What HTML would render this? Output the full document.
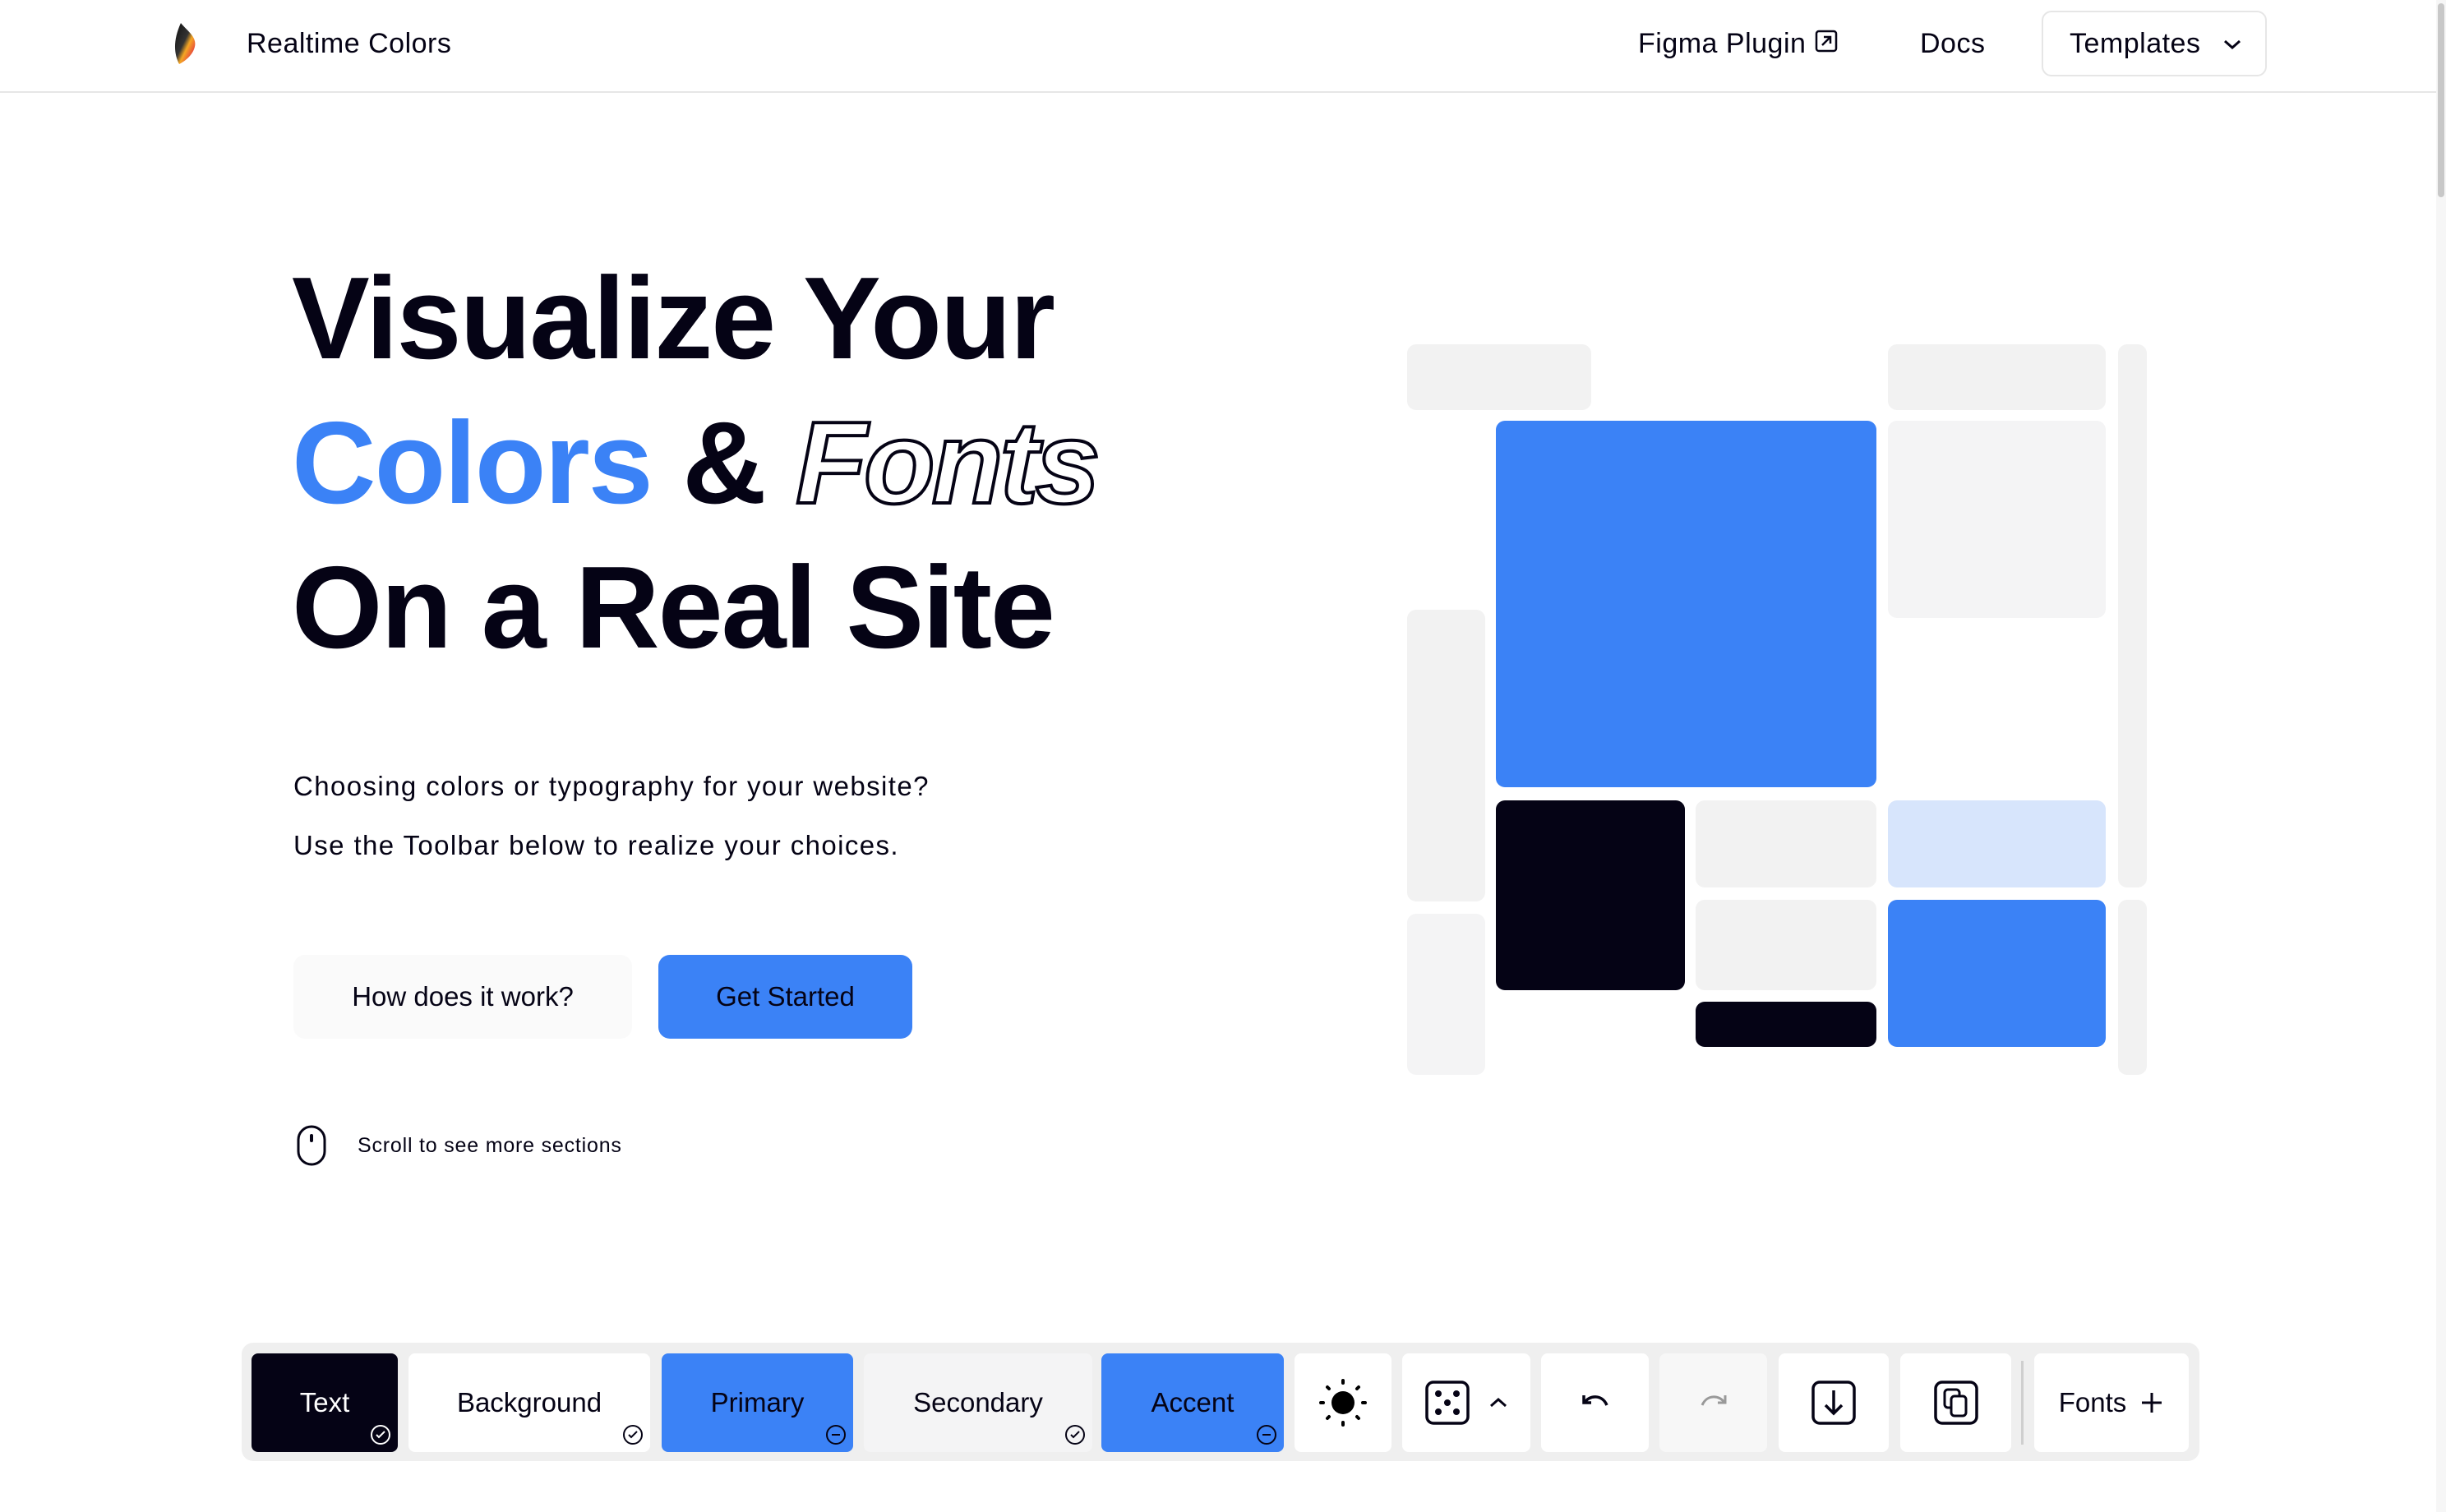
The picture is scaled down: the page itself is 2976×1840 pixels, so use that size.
<!DOCTYPE html>
<html><head><meta charset="utf-8"><style>
*{margin:0;padding:0;box-sizing:border-box}
html,body{width:2976px;height:1840px;overflow:hidden;background:#fff;font-family:"Liberation Sans",sans-serif;color:#050315}
.a{position:absolute}
.nav{left:0;top:0;width:2976px;height:113px;border-bottom:2px solid #e6e6e6}
.ntxt{font-size:34px;line-height:40px;letter-spacing:0.5px}
h1{position:absolute;left:355px;top:300px;font-size:142px;font-weight:600;line-height:176px;letter-spacing:-2px;white-space:nowrap}
.blue{color:#3b82f6}
.out{font-style:italic;color:#fff;-webkit-text-stroke:4px #050315;letter-spacing:-4px}
.p{left:357px;font-size:33px;line-height:40px;letter-spacing:1.4px}
.btn{top:1162px;height:102px;border-radius:14px;font-size:33px;display:flex;align-items:center;justify-content:center}
.r{position:absolute;border-radius:11px}
.g{background:#f2f2f2}.g2{background:#f4f4f5}
.tb{left:294px;top:1634px;width:2382px;height:144px;background:#efefef;border-radius:14px}
.it{position:absolute;top:1647px;height:120px;border-radius:8px;background:#fff;display:flex;align-items:center;justify-content:center;font-size:33px}
.ck{position:absolute;right:8px;bottom:8px;width:26px;height:26px}
</style></head><body>
<div class="a nav"></div>
<svg class="a" style="left:206px;top:26px" width="40" height="54" viewBox="0 0 40 54"><defs><linearGradient id="lg" x1="0" y1="0" x2="1" y2="1"><stop offset="0" stop-color="#111"/><stop offset=".45" stop-color="#333"/><stop offset=".6" stop-color="#f5a623"/><stop offset=".8" stop-color="#e74c3c"/><stop offset="1" stop-color="#dfe6ff"/></linearGradient></defs><path d="M14 2 C22 12 36 20 30 34 C26 44 16 50 12 52 C6 40 4 24 14 2Z" fill="url(#lg)"/></svg>
<div class="a ntxt" style="left:300px;top:33px">Realtime Colors</div>
<div class="a ntxt" style="left:1993px;top:33px">Figma Plugin</div>
<svg class="a" style="left:2208px;top:36px" width="28" height="28" viewBox="0 0 28 28"><rect x="2" y="2" width="24" height="24" rx="3" fill="none" stroke="#050315" stroke-width="2.5"/><path d="M9 19 L19 9 M11 9 H19 V17" fill="none" stroke="#050315" stroke-width="2.5"/></svg>
<div class="a ntxt" style="left:2336px;top:33px">Docs</div>
<div class="a" style="left:2484px;top:13px;width:274px;height:80px;border:2px solid #e6e6e6;border-radius:12px"></div>
<div class="a ntxt" style="left:2518px;top:33px">Templates</div>
<svg class="a" style="left:2704px;top:46px" width="24" height="16" viewBox="0 0 24 16"><path d="M3 4 L12 12 L21 4" fill="none" stroke="#050315" stroke-width="3"/></svg>
<div class="a" style="left:2964px;top:0;width:12px;height:1840px;background:#f6f6f6"></div>
<div class="a" style="left:2966px;top:4px;width:8px;height:236px;background:#c8c8c8;border-radius:4px"></div>

<h1>Visualize Your<br><span class="blue">Colors</span> &amp; <span class="out">Fonts</span><br>On a Real Site</h1>

<div class="a p" style="top:937px">Choosing colors or typography for your website?</div>
<div class="a p" style="top:1009px">Use the Toolbar below to realize your choices.</div>
<div class="a btn" style="left:357px;width:412px;background:#fafafa">How does it work?</div>
<div class="a btn" style="left:801px;width:309px;background:#3b82f6">Get Started</div>
<svg class="a" style="left:360px;top:1368px" width="38" height="52" viewBox="0 0 38 52"><rect x="3" y="3" width="32" height="46" rx="16" fill="none" stroke="#050315" stroke-width="3"/><rect x="17" y="12" width="4" height="10" rx="2" fill="#050315"/></svg>
<div class="a" style="left:435px;top:1379px;font-size:25px;line-height:30px;letter-spacing:0.8px">Scroll to see more sections</div>

<div class="r g" style="left:1712px;top:419px;width:224px;height:80px"></div>
<div class="r g" style="left:2297px;top:419px;width:265px;height:80px"></div>
<div class="r g" style="left:2577px;top:419px;width:35px;height:661px"></div>
<div class="r" style="left:1820px;top:512px;width:463px;height:446px;background:#3b82f6"></div>
<div class="r g2" style="left:2297px;top:512px;width:265px;height:240px"></div>
<div class="r g" style="left:1712px;top:742px;width:95px;height:355px"></div>
<div class="r g2" style="left:1712px;top:1112px;width:95px;height:196px"></div>
<div class="r" style="left:1820px;top:974px;width:230px;height:231px;background:#050315"></div>
<div class="r g" style="left:2063px;top:974px;width:220px;height:106px"></div>
<div class="r" style="left:2297px;top:974px;width:265px;height:106px;background:#d7e5fc"></div>
<div class="r g" style="left:2063px;top:1095px;width:220px;height:110px"></div>
<div class="r" style="left:2063px;top:1219px;width:220px;height:55px;background:#050315"></div>
<div class="r" style="left:2297px;top:1095px;width:265px;height:179px;background:#3b82f6"></div>
<div class="r g" style="left:2577px;top:1095px;width:35px;height:213px"></div>

<div class="a tb"></div>
<div class="it" style="left:306px;width:178px;background:#050315;color:#fff">Text<svg class="ck" viewBox="0 0 26 26"><circle cx="13" cy="13" r="11" fill="none" stroke="#fff" stroke-width="2"/><path d="M8 13l3 3 7-7" fill="none" stroke="#fff" stroke-width="2"/></svg></div>
<div class="it" style="left:497px;width:294px">Background<svg class="ck" viewBox="0 0 26 26"><circle cx="13" cy="13" r="11" fill="none" stroke="#050315" stroke-width="2"/><path d="M8 13l3 3 7-7" fill="none" stroke="#050315" stroke-width="2"/></svg></div>
<div class="it" style="left:805px;width:233px;background:#3b82f6">Primary<svg class="ck" viewBox="0 0 26 26"><circle cx="13" cy="13" r="11" fill="none" stroke="#050315" stroke-width="2"/><path d="M8 13h10" stroke="#050315" stroke-width="2"/></svg></div>
<div class="it" style="left:1051px;width:278px;background:#f4f4f5">Secondary<svg class="ck" viewBox="0 0 26 26"><circle cx="13" cy="13" r="11" fill="none" stroke="#050315" stroke-width="2"/><path d="M8 13l3 3 7-7" fill="none" stroke="#050315" stroke-width="2"/></svg></div>
<div class="it" style="left:1340px;width:222px;background:#3b82f6">Accent<svg class="ck" viewBox="0 0 26 26"><circle cx="13" cy="13" r="11" fill="none" stroke="#050315" stroke-width="2"/><path d="M8 13h10" stroke="#050315" stroke-width="2"/></svg></div>
<div class="it" style="left:1575px;width:118px"><svg width="60" height="60" viewBox="0 0 60 60"><circle cx="30" cy="30" r="14" fill="#000"/><g stroke="#000" stroke-width="4" stroke-linecap="round"><path d="M30 3v3M30 54v3M3 30h3M54 30h3M11 11l2 2M47 47l2 2M11 49l2-2M47 13l2-2"/></g></svg></div>
<div class="it" style="left:1706px;width:156px"><svg width="56" height="56" viewBox="0 0 56 56"><rect x="3" y="3" width="50" height="50" rx="8" fill="none" stroke="#050315" stroke-width="3.5"/><g fill="#050315"><circle cx="17" cy="17" r="4"/><circle cx="39" cy="17" r="4"/><circle cx="28" cy="28" r="4"/><circle cx="17" cy="39" r="4"/><circle cx="39" cy="39" r="4"/></g></svg><svg style="margin-left:22px" width="24" height="16" viewBox="0 0 24 16"><path d="M3 12 L12 4 L21 12" fill="none" stroke="#050315" stroke-width="3"/></svg></div>
<div class="it" style="left:1875px;width:131px"><svg width="40" height="30" viewBox="0 0 40 30"><path d="M6 6v9h9M7 15 C12 6 28 4 34 18" fill="none" stroke="#050315" stroke-width="3.5"/></svg></div>
<div class="it" style="left:2019px;width:131px;background:#f7f7f7"><svg width="40" height="30" viewBox="0 0 40 30"><path d="M34 6v9h-9M33 15 C28 6 12 4 6 18" fill="none" stroke="#999" stroke-width="3"/></svg></div>
<div class="it" style="left:2164px;width:134px"><svg width="56" height="56" viewBox="0 0 56 56"><rect x="3" y="3" width="50" height="50" rx="8" fill="none" stroke="#050315" stroke-width="3.5"/><path d="M28 13v28M18 31l10 10 10-10" fill="none" stroke="#050315" stroke-width="3.5"/></svg></div>
<div class="it" style="left:2312px;width:135px"><svg width="56" height="56" viewBox="0 0 56 56"><rect x="3" y="3" width="50" height="50" rx="8" fill="none" stroke="#050315" stroke-width="3.5"/><rect x="14" y="12" width="18" height="22" rx="4" fill="none" stroke="#050315" stroke-width="3"/><rect x="22" y="20" width="18" height="24" rx="4" fill="#fff" stroke="#050315" stroke-width="3"/></svg></div>
<div class="a" style="left:2459px;top:1656px;width:3px;height:102px;background:#cfcfcf"></div>
<div class="it" style="left:2475px;width:188px">Fonts<svg style="margin-left:16px" width="30" height="30" viewBox="0 0 30 30"><path d="M15 3v24M3 15h24" stroke="#050315" stroke-width="3"/></svg></div>
</body></html>
